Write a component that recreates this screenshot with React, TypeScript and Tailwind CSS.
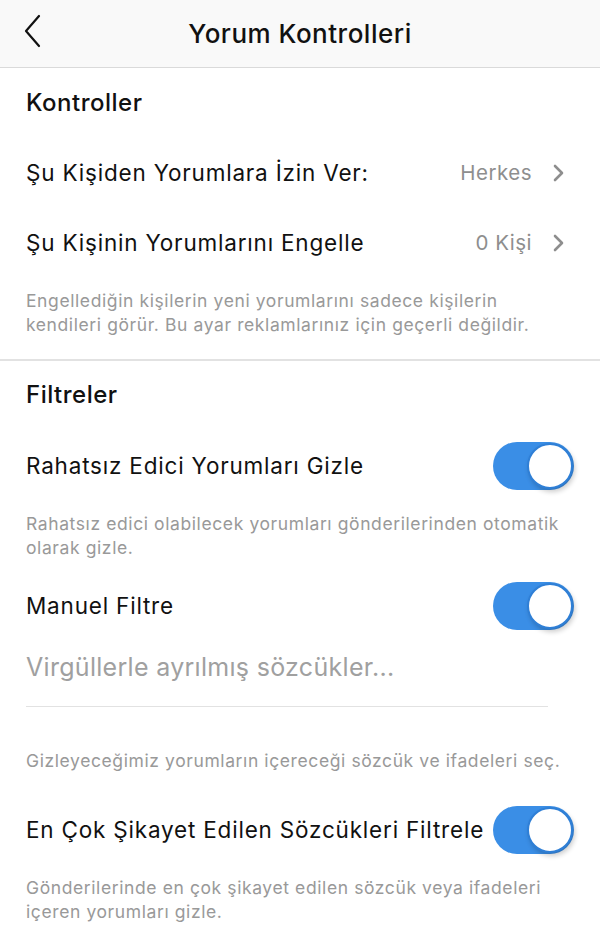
import React from "react";

const font = { fontFamily: "Inter, 'Noto Sans', sans-serif" };

function Toggle() {
  return (
    <div className="relative w-[81px] h-[48px] rounded-full bg-[#3a8ee6] shrink-0">
      <div className="absolute right-[1px] top-[1px] w-[46px] h-[46px] rounded-full bg-white border-2 border-[#2f7fd6] shadow-[2px_3px_5px_rgba(0,0,0,0.2)]" />
    </div>
  );
}

function Chevron() {
  return (
    <svg width="14" height="20" viewBox="0 0 14 20" className="shrink-0">
      <path d="M3 3 L10 10 L3 17" fill="none" stroke="#8e8e8e" strokeWidth="2.6" strokeLinecap="round" strokeLinejoin="round" />
    </svg>
  );
}

const main = "text-[22.5px] tracking-[0.8px]";
const desc = "text-[17.5px] leading-[24px] tracking-[0.6px] text-[#999] mr-[-6px]";
const head = "text-[24px] font-medium tracking-[0.5px]";

export default function App() {
  return (
    <div className="w-[600px] h-[948px] bg-white overflow-hidden text-[#111]" style={font}>
      <div className="h-[68px] bg-[#f9f9f9] border-b border-[#dadada] flex items-center relative">
        <svg width="20" height="34" viewBox="0 0 20 34" className="absolute left-[23px] top-[14px]">
          <path d="M16 2 L3 17 L16 32" fill="none" stroke="#111" strokeWidth="2.2" strokeLinecap="round" strokeLinejoin="round" />
        </svg>
        <div className="w-full text-center text-[26px] font-medium tracking-[0.5px]">Yorum Kontrolleri</div>
      </div>

      <div className="px-[26px]">
        <div className={`h-[70px] flex items-center ${head}`}>Kontroller</div>
        <div className="h-[70px] flex items-center justify-between">
          <span className={main}>Şu Kişiden Yorumlara İzin Ver:</span>
          <div className="flex items-center gap-[20px] pr-[8px]">
            <span className="text-[20.5px] tracking-[0.5px] text-[#8e8e8e]">Herkes</span>
            <Chevron />
          </div>
        </div>
        <div className="h-[70px] flex items-center justify-between">
          <span className={main}>Şu Kişinin Yorumlarını Engelle</span>
          <div className="flex items-center gap-[20px] pr-[8px]">
            <span className="text-[20.5px] tracking-[0.5px] text-[#8e8e8e]">0 Kişi</span>
            <Chevron />
          </div>
        </div>
        <p className={`pt-[11px] pb-[22px] ${desc}`}>
          Engellediğin kişilerin yeni yorumlarını sadece kişilerin<br />kendileri görür. Bu ayar reklamlarınız için geçerli değildir.
        </p>
      </div>
      <div className="h-[2px] bg-[#e2e2e2]" />

      <div className="px-[26px]">
        <div className={`h-[68px] flex items-center ${head}`}>Filtreler</div>
        <div className="h-[74px] flex items-center justify-between">
          <span className={main}>Rahatsız Edici Yorumları Gizle</span>
          <Toggle />
        </div>
        <p className={`pt-[9px] ${desc}`}>
          Rahatsız edici olabilecek yorumları gönderilerinden otomatik olarak gizle.
        </p>
        <div className="mt-[10px] h-[72px] flex items-center justify-between">
          <span className={main}>Manuel Filtre</span>
          <Toggle />
        </div>
        <div className="w-[522px] h-[65px] border-b border-[#e2e2e2] flex items-start pt-[8px]">
          <span className="text-[25px] leading-[34px] tracking-[0.3px] text-[#a0a0a0]">Virgüllerle ayrılmış sözcükler...</span>
        </div>
        <p className={`pt-[42px] ${desc}`}>
          Gizleyeceğimiz yorumların içereceği sözcük ve ifadeleri seç.
        </p>
        <div className="mt-[21px] h-[72px] flex items-center justify-between">
          <span className={`${main} whitespace-nowrap`}>En Çok Şikayet Edilen Sözcükleri Filtrele</span>
          <Toggle />
        </div>
        <p className={`pt-[10px] ${desc}`}>
          Gönderilerinde en çok şikayet edilen sözcük veya ifadeleri içeren yorumları gizle.
        </p>
      </div>
    </div>
  );
}
